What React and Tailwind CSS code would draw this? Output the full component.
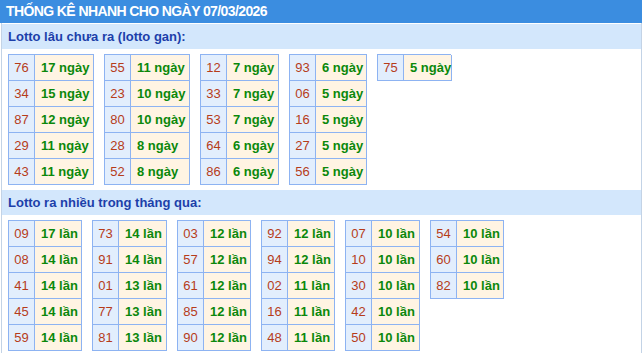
import React from 'react';

const font = { fontFamily: '"Liberation Sans", Arial, sans-serif' };

/* ── Data ─────────────────────────────────────────────── */
const ganTables = [
  { w: 'w-[86px]', rows: [['76', '17 ngày'], ['34', '15 ngày'], ['87', '12 ngày'], ['29', '11 ngày'], ['43', '11 ngày']] },
  { w: 'w-[86px]', rows: [['55', '11 ngày'], ['23', '10 ngày'], ['80', '10 ngày'], ['28', '8 ngày'], ['52', '8 ngày']] },
  { w: 'w-[79px]', rows: [['12', '7 ngày'], ['33', '7 ngày'], ['53', '7 ngày'], ['64', '6 ngày'], ['86', '6 ngày']] },
  { w: 'w-[78px]', rows: [['93', '6 ngày'], ['06', '5 ngày'], ['16', '5 ngày'], ['27', '5 ngày'], ['56', '5 ngày']] },
  { w: 'w-[74px]', rows: [['75', '5 ngày']] },
];

const hotTables = [
  { w: 'w-[74px]', rows: [['09', '17 lần'], ['08', '14 lần'], ['41', '14 lần'], ['45', '14 lần'], ['59', '14 lần']] },
  { w: 'w-[75px]', rows: [['73', '14 lần'], ['91', '14 lần'], ['01', '13 lần'], ['77', '13 lần'], ['81', '13 lần']] },
  { w: 'w-[74px]', rows: [['03', '12 lần'], ['57', '12 lần'], ['61', '12 lần'], ['85', '12 lần'], ['90', '12 lần']] },
  { w: 'w-[74px]', rows: [['92', '12 lần'], ['94', '12 lần'], ['02', '11 lần'], ['16', '11 lần'], ['48', '11 lần']] },
  { w: 'w-[75px]', rows: [['07', '10 lần'], ['10', '10 lần'], ['30', '10 lần'], ['42', '10 lần'], ['50', '10 lần']] },
  { w: 'w-[74px]', rows: [['54', '10 lần'], ['60', '10 lần'], ['82', '10 lần']] },
];

/* ── Small table: number | count ──────────────────────── */
const StatTable = ({ w, rows }) => (
  <div className={`${w} flex flex-col border-l border-t border-[#8db3f2]`}>
    {rows.map(([num, val]) => (
      <div key={num} className="flex h-[26px]">
        <div className="w-[26px] shrink-0 flex items-center justify-center bg-[#e2eefd] border-r border-b border-[#8db3f2] text-[13px] text-[#b63c1a]">
          {num}
        </div>
        <div className="flex-1 flex items-center pl-[6px] bg-[#fff4e3] border-r border-b border-[#8db3f2] text-[13px] font-bold text-[#0b880b] whitespace-nowrap">
          {val}
        </div>
      </div>
    ))}
  </div>
);

const SubHeader = ({ children }) => (
  <div className="h-[25px] bg-[#d3e7fc] flex items-center pl-[6px] text-[13px] font-bold text-[#1c3faa]">
    {children}
  </div>
);

/* ── Main export ─────────────────────────────────────── */
export default function App() {
  return (
    <div className="w-[642px] h-[353px] bg-white overflow-hidden" style={font}>
      <div className="h-[23px] bg-[#3b8de0] flex items-center pl-[6px] text-[14px] font-bold text-white tracking-[-0.6px]">
        THỐNG KÊ NHANH CHO NGÀY 07/03/2026
      </div>
      <div className="ml-px h-[330px] border-x border-[#c3d3e6] pt-px">
        <SubHeader>Lotto lâu chưa ra (lotto gan):</SubHeader>
        <div className="flex items-start gap-[10px] pl-[6px] pt-[5px]">
          {ganTables.map((t, i) => <StatTable key={i} {...t} />)}
        </div>
        <div className="h-[5px]" />
        <SubHeader>Lotto ra nhiều trong tháng qua:</SubHeader>
        <div className="flex items-start gap-[10px] pl-[6px] pt-[5px]">
          {hotTables.map((t, i) => <StatTable key={i} {...t} />)}
        </div>
      </div>
    </div>
  );
}
